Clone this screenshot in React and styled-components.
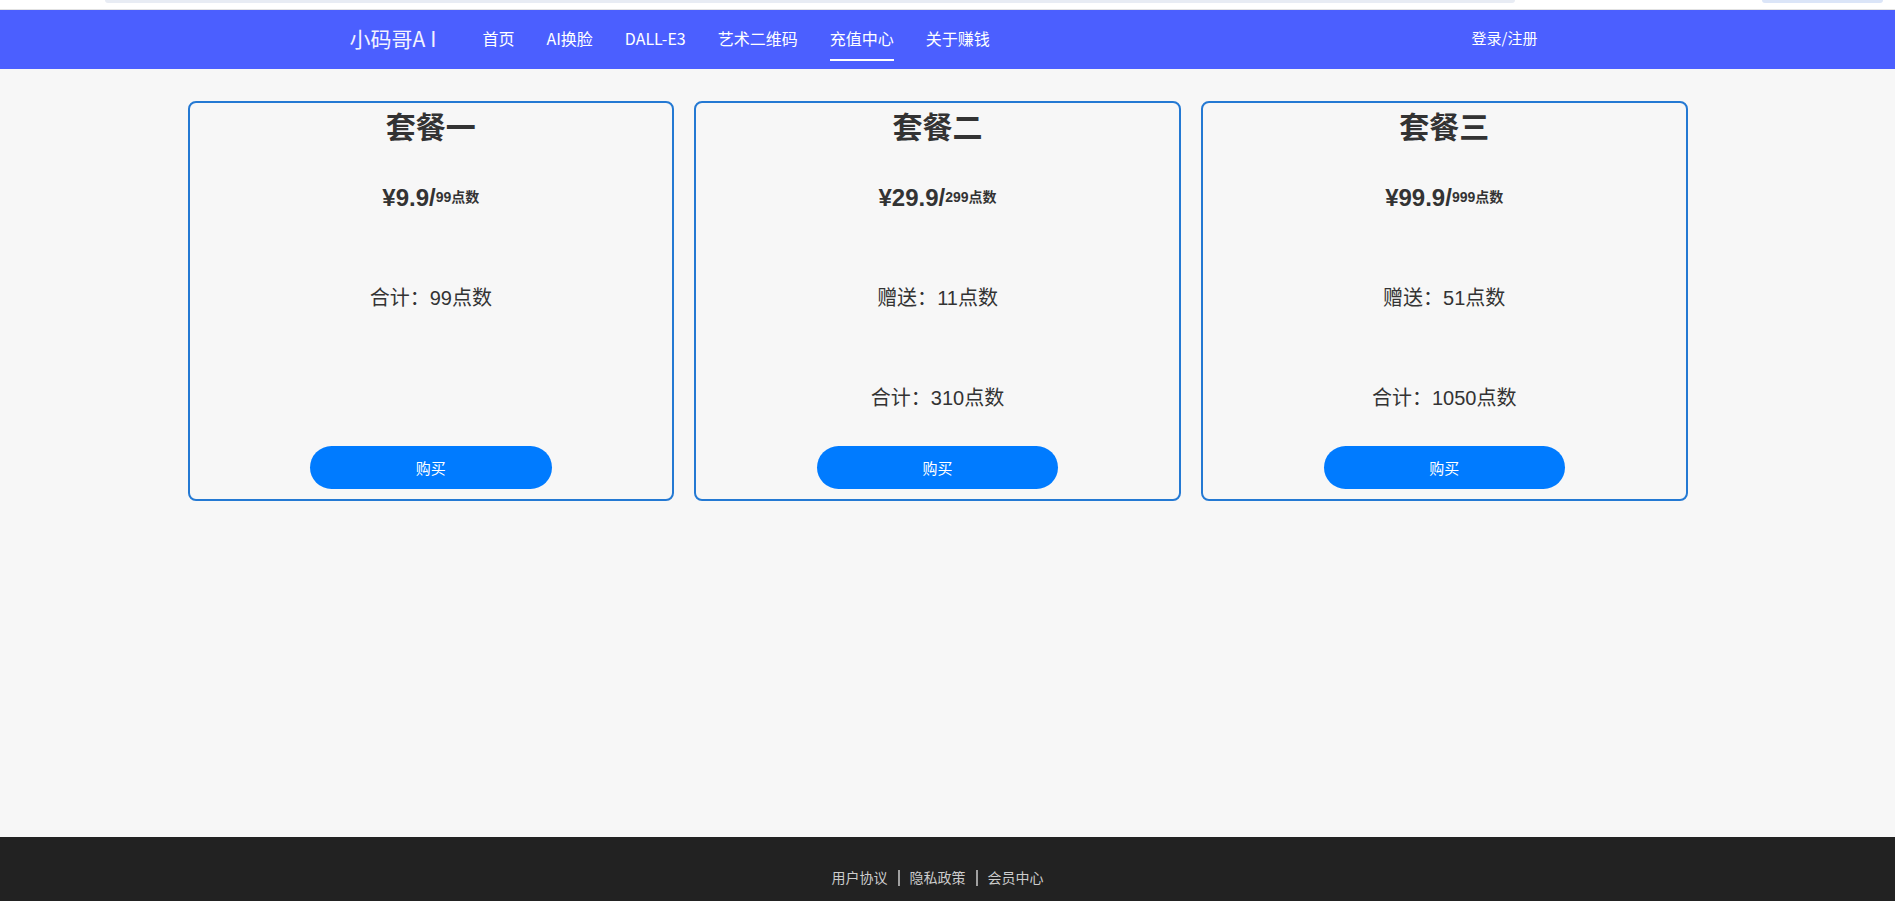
import styled, { createGlobalStyle } from "styled-components";

const GlobalStyle = createGlobalStyle`
  html, body {
    margin: 0;
    padding: 0;
  }
  body {
    background-color: #f7f7f7;
    font-family: "Liberation Sans", "Noto Sans CJK SC", sans-serif;
    color: #333;
  }
`;

const Page = styled.div`
  min-height: 100vh;
  display: flex;
  flex-direction: column;
`;

const TopStrip = styled.div`
  height: 10px;
  box-sizing: border-box;
  background-color: #ffffff;
  border-bottom: 1px solid #e2e2e2;
  display: flex;
  align-items: flex-start;
  padding-left: 105px;
`;

const Remnant = styled.div`
  width: ${(props) => props.w}px;
  margin-left: ${(props) => props.ml || 0}px;
  height: 3px;
  background-color: ${(props) => props.bg};
  border-radius: 0 0 6px 6px;
`;

const NavBar = styled.header`
  height: 59px;
  background-color: #4b5fff;
  padding-right: 20px;
`;

const NavInner = styled.div`
  width: 1200px;
  height: 100%;
  margin: 0 auto;
  box-sizing: border-box;
  padding-left: 12px;
  display: flex;
  align-items: center;
`;

const Logo = styled.div`
  font-family: "Noto Sans CJK SC", sans-serif;
  font-size: 21px;
  font-weight: 400;
  color: #f2f2ff;
  margin-right: 41px;
  padding-bottom: 3px;

  span {
    letter-spacing: 5px;
  }
`;

const NavList = styled.nav`
  display: flex;
  align-items: center;
  gap: 32px;
  height: 100%;
`;

const NavLink = styled.a`
  position: relative;
  display: flex;
  align-items: center;
  height: 100%;
  box-sizing: border-box;
  padding-bottom: 4px;
  font-family: "Noto Sans CJK SC", sans-serif;
  font-size: 16px;
  color: #ffffff;
  text-decoration: none;
  cursor: pointer;

  &::after {
    content: "";
    display: ${(props) => (props.active ? "block" : "none")};
    position: absolute;
    left: 0;
    right: 0;
    bottom: 8px;
    height: 2px;
    background-color: #ffffff;
  }
`;

const Login = styled.a`
  margin-left: auto;
  padding-bottom: 4px;
  font-family: "Noto Sans CJK SC", sans-serif;
  font-size: 15px;
  color: #ffffff;
  cursor: pointer;
`;

const Main = styled.main`
  flex: 1;
  padding: 32px 20px 0 0;
`;

const CardRow = styled.div`
  width: 1500px;
  margin: 0 auto;
  display: flex;
  gap: 20px;
  align-items: stretch;
`;

const Card = styled.div`
  flex: 1;
  min-height: 400px;
  box-sizing: border-box;
  border: 2px solid #2479d3;
  border-radius: 8px;
  display: flex;
  flex-direction: column;
  align-items: center;
  padding-bottom: 10px;
`;

const Title = styled.h2`
  margin: 0;
  font-family: "Noto Sans CJK SC", sans-serif;
  font-size: 30px;
  font-weight: 700;
  line-height: 44px;
  color: #333;
`;

const Price = styled.div`
  margin-top: 35px;
  line-height: 30px;
  font-size: 24px;
  font-weight: 700;
  color: #333;

  span {
    font-size: 14px;
    vertical-align: 4px;
  }
`;

const Line = styled.p`
  margin: 70px 0 0;
  line-height: 30px;
  font-size: 20px;
  color: #333;
`;

const BuyButton = styled.button`
  margin-top: auto;
  width: 50%;
  height: 43px;
  border: none;
  border-radius: 22px;
  background-color: #007bff;
  color: #ffffff;
  font-family: "Noto Sans CJK SC", sans-serif;
  font-size: 15px;
  cursor: pointer;
`;

const Footer = styled.footer`
  height: 64px;
  box-sizing: border-box;
  background-color: #222222;
  padding: 30px 20px 0 0;
  text-align: center;
  line-height: 20px;
  font-family: "Noto Sans CJK SC", sans-serif;
  font-size: 14px;
  color: #cccccc;
`;

const Sep = styled.span`
  display: inline-block;
  width: 2px;
  height: 16px;
  margin: 0 10px;
  background-color: #a0a0a0;
  vertical-align: -3px;
`;

const navItems = ["首页", "AI换脸", "DALL-E3", "艺术二维码", "充值中心", "关于赚钱"];

const plans = [
  { name: "套餐一", price: "9.9", points: 99, total: 99 },
  { name: "套餐二", price: "29.9", points: 299, bonus: 11, total: 310 },
  { name: "套餐三", price: "99.9", points: 999, bonus: 51, total: 1050 },
];

export default function App() {
  return (
    <Page>
      <GlobalStyle />
      <TopStrip>
        <Remnant w={1410} bg="#e8ecf4" />
        <Remnant w={121} ml={247} bg="#dbe5f8" />
      </TopStrip>
      <NavBar>
        <NavInner>
          <Logo>
            小码哥<span>AI</span>
          </Logo>
          <NavList>
            {navItems.map((item) => (
              <NavLink key={item} active={item === "充值中心" ? 1 : 0}>
                {item}
              </NavLink>
            ))}
          </NavList>
          <Login>登录/注册</Login>
        </NavInner>
      </NavBar>
      <Main>
        <CardRow>
          {plans.map((plan) => (
            <Card key={plan.name}>
              <Title>{plan.name}</Title>
              <Price>
                ¥{plan.price}/<span>{plan.points}点数</span>
              </Price>
              {plan.bonus && <Line>赠送：{plan.bonus}点数</Line>}
              <Line>合计：{plan.total}点数</Line>
              <BuyButton>购买</BuyButton>
            </Card>
          ))}
        </CardRow>
      </Main>
      <Footer>
        用户协议<Sep />隐私政策<Sep />会员中心
      </Footer>
    </Page>
  );
}
